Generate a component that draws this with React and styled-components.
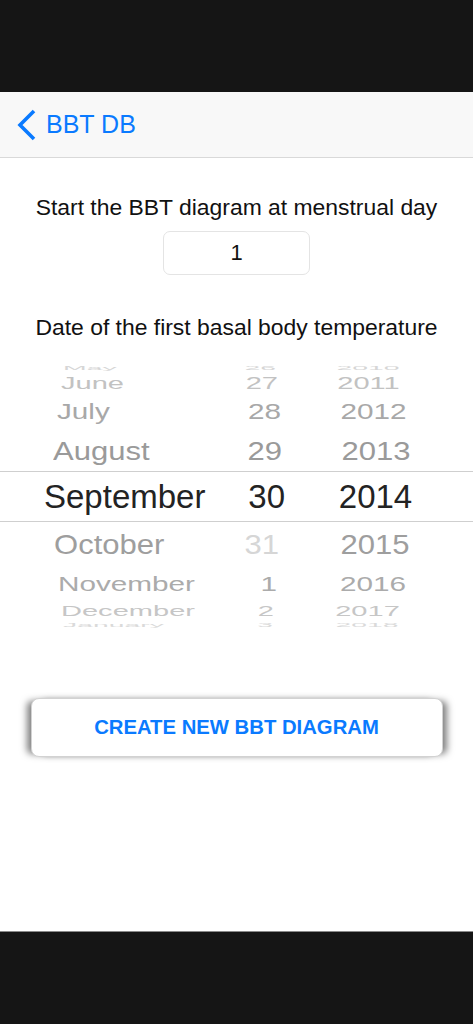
import React from "react";
import styled, { createGlobalStyle } from "styled-components";

const Global = createGlobalStyle`
  html, body { margin: 0; padding: 0; background: #fff; }
  body { font-family: "Liberation Sans", Arial, sans-serif; -webkit-font-smoothing: antialiased; }
  * { box-sizing: border-box; }
`;

const Page = styled.div`
  width: 473px;
  height: 1024px;
  display: flex;
  flex-direction: column;
  overflow: hidden;
`;

const TopBar = styled.div`
  height: 92px;
  flex: none;
  background: #151515;
`;

const NavBar = styled.div`
  height: 66px;
  flex: none;
  background: #f8f8f8;
  border-bottom: 1px solid #d9d9d9;
  display: flex;
  align-items: center;
  padding-left: 17px;
  gap: 9px;
`;

const BackTitle = styled.span`
  font-size: 25px;
  color: #0a7aff;
  line-height: 1;
`;

const Content = styled.div`
  flex: 1;
  background: #fff;
  display: flex;
  flex-direction: column;
  align-items: center;
  padding-top: 36px;
`;

const Label = styled.div`
  font-size: 22.9px;
  line-height: 26px;
  color: #111;
  text-align: center;
  white-space: nowrap;
`;

const NumberBox = styled.div`
  width: 147px;
  height: 44px;
  margin-top: 11px;
  margin-bottom: 39px;
  border: 1px solid #e4e4e4;
  border-radius: 7px;
  display: flex;
  align-items: center;
  justify-content: center;
  font-size: 22px;
  color: #111;
`;

const Picker = styled.div`
  width: 473px;
  margin-top: 20px;
  display: flex;
  flex-direction: column;
`;

const PickerRow = styled.div`
  height: ${(p) => p.$h}px;
  display: flex;
  align-items: center;
  font-size: 33px;
  line-height: 1;
  white-space: nowrap;
  color: ${(p) => p.$color};
  border-top: ${(p) => (p.$selected ? "1px solid #cfcfcf" : "none")};
  border-bottom: ${(p) => (p.$selected ? "1px solid #cfcfcf" : "none")};
`;

const MonthCell = styled.span`
  margin-left: ${(p) => p.$left}px;
  width: ${(p) => 234 - p.$left}px;
  text-align: left;
  transform: scale(${(p) => p.$sx}, ${(p) => p.$sy});
  transform-origin: left center;
`;

const DayCell = styled.span`
  width: ${(p) => p.$right - 234}px;
  text-align: right;
  color: ${(p) => p.$color || "inherit"};
  transform: scale(${(p) => p.$sx}, ${(p) => p.$sy});
  transform-origin: right center;
`;

const YearCell = styled.span`
  width: ${(p) => 2 * (p.$center - p.$start)}px;
  text-align: center;
  transform: scale(${(p) => p.$sx}, ${(p) => p.$sy});
  transform-origin: center center;
`;

const CreateButton = styled.button`
  margin-top: 68px;
  width: 412px;
  height: 59px;
  background: #fff;
  border: 1px solid #d2d2d2;
  border-radius: 8px;
  box-shadow: -7px 0 7px -3px rgba(0, 0, 0, 0.5), 7px 0 7px -3px rgba(0, 0, 0, 0.5);
  font-family: "Liberation Sans", Arial, sans-serif;
  font-weight: 700;
  font-size: 20.3px;
  color: #0a7aff;
  display: flex;
  align-items: center;
  justify-content: center;
  padding: 0;
  cursor: pointer;
`;

const BottomBar = styled.div`
  height: 93px;
  flex: none;
  background: #151515;
  border-top: 1px solid #8a8a8a;
`;

const rows = [
  { m: "May", d: "26", y: "2010", h: 14, sx: 0.86, sy: 0.18, c: "#d6d6d6", ml: 63, dr: 276, yc: 368 },
  { m: "June", d: "27", y: "2011", h: 19, sx: 0.88, sy: 0.49, c: "#c2c2c2", ml: 61, dr: 278, yc: 368.5 },
  { m: "July", d: "28", y: "2012", h: 37, sx: 0.9, sy: 0.66, c: "#a8a8a8", ml: 57, dr: 281, yc: 373.5 },
  { m: "August", d: "29", y: "2013", h: 41, sx: 0.94, sy: 0.8, c: "#9a9a9a", ml: 53, dr: 282, yc: 376 },
  { m: "September", d: "30", y: "2014", h: 51, sx: 1, sy: 1, c: "#232323", sel: true, ml: 44, dr: 285, yc: 375.5 },
  { m: "October", d: "31", y: "2015", h: 44, sx: 0.94, sy: 0.82, c: "#9e9e9e", dc: "#d6d6d6", ml: 54, dr: 279, yc: 375 },
  { m: "November", d: "1", y: "2016", h: 34, sx: 0.9, sy: 0.64, c: "#ababab", ml: 58, dr: 277, yc: 373 },
  { m: "December", d: "2", y: "2017", h: 20, sx: 0.88, sy: 0.45, c: "#c6c6c6", ml: 61, dr: 274, yc: 367.5 },
  { m: "January", d: "3", y: "2018", h: 10, sx: 0.86, sy: 0.14, c: "#dadada", ml: 63, dr: 273, yc: 367 },
];

function BackChevron() {
  return (
    <svg width="20" height="32" viewBox="0 0 20 32" aria-hidden="true">
      <polyline
        points="17,2 3,16 17,30"
        fill="none"
        stroke="#0a7aff"
        strokeWidth="3.6"
        strokeLinejoin="miter"
      />
    </svg>
  );
}

export default function App() {
  return (
    <Page>
      <Global />
      <TopBar />
      <NavBar>
        <BackChevron />
        <BackTitle>BBT DB</BackTitle>
      </NavBar>
      <Content>
        <Label>Start the BBT diagram at menstrual day</Label>
        <NumberBox>1</NumberBox>
        <Label>Date of the first basal body temperature</Label>
        <Picker>
          {rows.map((r) => (
            <PickerRow key={r.m} $h={r.h} $selected={r.sel} $color={r.c}>
              <MonthCell $left={r.ml} $sx={r.sx} $sy={r.sy}>
                {r.m}
              </MonthCell>
              <DayCell $right={r.dr} $color={r.dc} $sx={r.sx} $sy={r.sy}>
                {r.d}
              </DayCell>
              <YearCell $start={r.dr} $center={r.yc} $sx={r.sx} $sy={r.sy}>
                {r.y}
              </YearCell>
            </PickerRow>
          ))}
        </Picker>
        <CreateButton>CREATE NEW BBT DIAGRAM</CreateButton>
      </Content>
      <BottomBar />
    </Page>
  );
}
